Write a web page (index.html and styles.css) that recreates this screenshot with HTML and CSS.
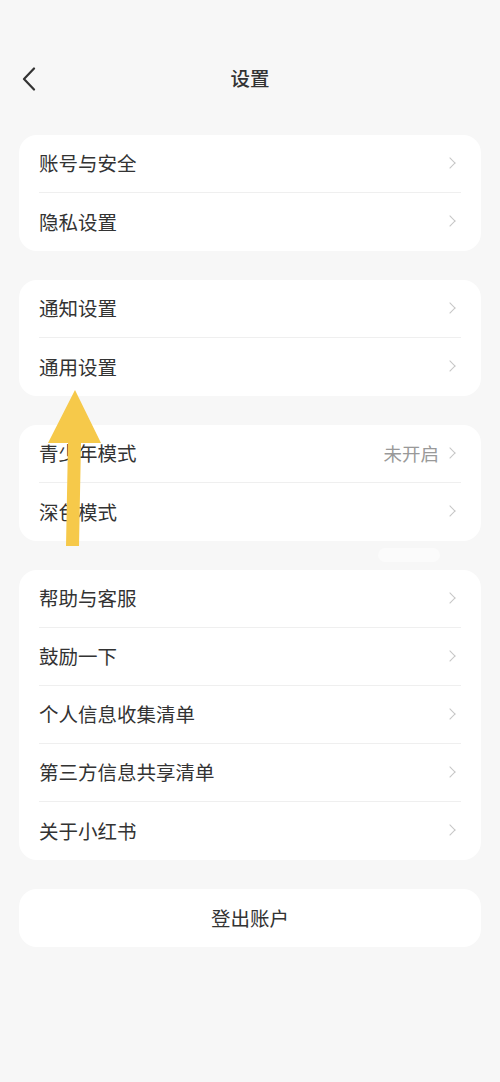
FILE: index.html
```html
<!DOCTYPE html>
<html lang="zh-CN">
<head>
    <meta charset="UTF-8">
    <meta name="viewport" content="width=device-width, initial-scale=1.0">
    <title>设置</title>
    <link rel="stylesheet" href="styles.css">
</head>
<body>
    <div class="page">
        <div class="header">
            <span class="back">
                <svg width="14" height="24" viewBox="0 0 14 24"><path d="M12 1.5 L2 12 L12 22.5" fill="none" stroke="#333" stroke-width="2.2" stroke-linecap="round" stroke-linejoin="round"/></svg>
            </span>
            <h1>设置</h1>
        </div>

        <div class="card">
            <div class="row"><span class="label">账号与安全</span><span class="arrow"></span></div>
            <div class="row"><span class="label">隐私设置</span><span class="arrow"></span></div>
        </div>

        <div class="card">
            <div class="row"><span class="label">通知设置</span><span class="arrow"></span></div>
            <div class="row"><span class="label">通用设置</span><span class="arrow"></span></div>
        </div>

        <div class="card">
            <div class="row"><span class="label">青少年模式</span><span class="value">未开启</span><span class="arrow"></span></div>
            <div class="row"><span class="label">深色模式</span><span class="arrow"></span></div>
        </div>

        <div class="card">
            <div class="row"><span class="label">帮助与客服</span><span class="arrow"></span></div>
            <div class="row"><span class="label">鼓励一下</span><span class="arrow"></span></div>
            <div class="row"><span class="label">个人信息收集清单</span><span class="arrow"></span></div>
            <div class="row"><span class="label">第三方信息共享清单</span><span class="arrow"></span></div>
            <div class="row"><span class="label">关于小红书</span><span class="arrow"></span></div>
        </div>

        <div class="card logout">登出账户</div>

        <!-- 标注用的黄色箭头 -->
        <svg class="pointer" width="60" height="165" viewBox="0 0 60 165">
            <polygon points="27,0 53,53 33,53 31,156 18,156 20,53 0,53" fill="#f6c94a"/>
        </svg>
        <span class="ghost"></span>
    </div>
</body>
</html>
```

FILE: styles.css
```css
* {
    margin: 0;
    padding: 0;
    box-sizing: border-box;
}

body {
    font-family: "Noto Sans CJK SC", "Noto Sans", sans-serif;
    background: #f7f7f7;
    color: #333;
}

.page {
    position: relative;
    width: 500px;
    min-height: 1082px;
    padding: 0 19px;
}

.header {
    position: relative;
    height: 135px;
    display: flex;
    justify-content: center;
    align-items: flex-start;
    padding-top: 64px;
}

.header h1 {
    font-size: 19.5px;
    line-height: 28px;
    font-weight: 500;
    color: #333;
}

.back {
    position: absolute;
    left: 3px;
    top: 67px;
    display: flex;
}

.card {
    background: #fff;
    border-radius: 18px;
    padding: 0 20px;
    margin-bottom: 29px;
}

.row {
    height: 58px;
    display: flex;
    align-items: center;
    padding-bottom: 2px;
    border-bottom: 1px solid #efefef;
}

.row:last-child {
    border-bottom: none;
}

.label {
    flex: 1;
    font-size: 19.5px;
    color: #333;
}

.value {
    font-size: 18.5px;
    color: #999;
    margin-right: 7px;
}

.arrow {
    width: 8px;
    height: 8px;
    border-top: 1.5px solid #c6c6c6;
    border-right: 1.5px solid #c6c6c6;
    transform: rotate(45deg);
    margin-right: 7px;
}

.logout {
    height: 58px;
    display: flex;
    align-items: center;
    justify-content: center;
    padding-bottom: 2px;
    font-size: 19.5px;
    color: #333;
}

.pointer {
    position: absolute;
    left: 48px;
    top: 390px;
}

.ghost {
    position: absolute;
    left: 378px;
    top: 548px;
    width: 62px;
    height: 14px;
    border-radius: 7px;
    background: #fbfbfb;
}
```
